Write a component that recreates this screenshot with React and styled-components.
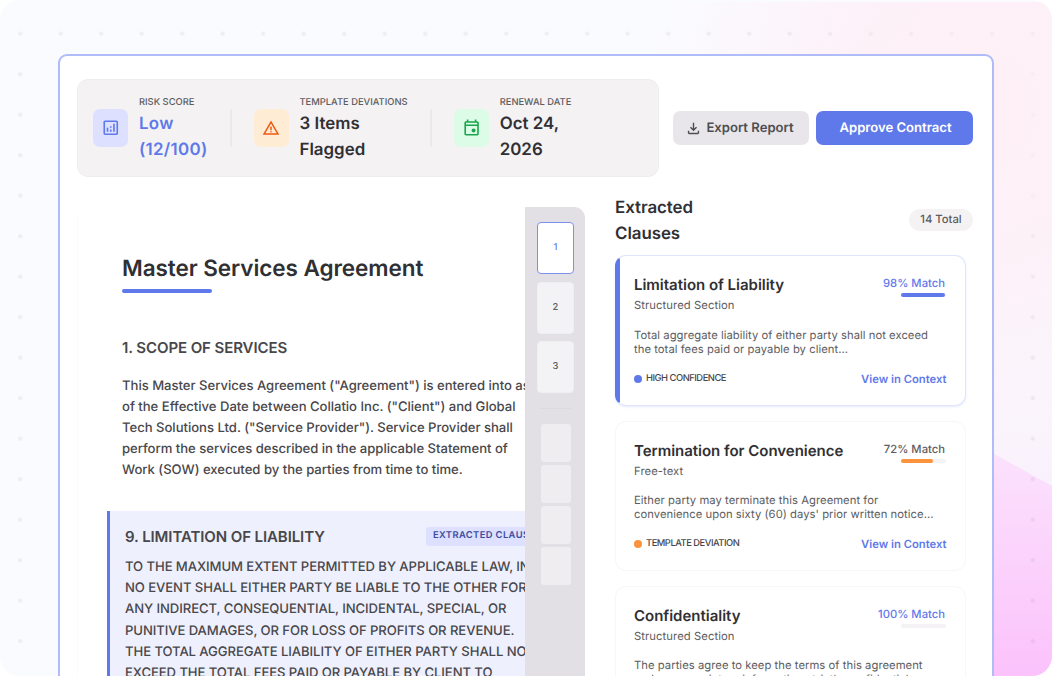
import React from 'react';
import styled, { createGlobalStyle } from 'styled-components';

const GlobalStyle = createGlobalStyle`
  * { box-sizing: border-box; }
  body {
    margin: 0;
    background: #fff;
    font-family: Inter, "Liberation Sans", sans-serif;
    color: #303034;
    overflow: hidden;
    text-rendering: geometricPrecision;
  }
  h1, h2, h3, p { margin: 0; font-weight: inherit; }
`;

const Page = styled.div`
  position: relative;
  width: 1052px;
  height: 676px;
  padding: 54px 58px 0;
  border-radius: 20px;
  overflow: hidden;
  background: #fafbff;
`;

const Backdrop = styled.svg`
  position: absolute;
  left: 0;
  top: 0;
`;

const Window = styled.main`
  position: relative;
  width: 936px;
  height: 700px;
  padding: 23px 17px 0;
  background: #fff;
  border: 2px solid #afbcf8;
  border-radius: 9px;
`;

const Toolbar = styled.header`
  display: flex;
  align-items: center;
`;

const Summary = styled.section`
  display: flex;
  flex: none;
  width: 582px;
  height: 98px;
  padding: 15px 15px 0;
  margin-right: 14px;
  background: #f4f2f3;
  border: 1px solid #eeecee;
  border-radius: 11px;
`;

const Metric = styled.div`
  display: flex;
  width: ${(p) => p.$width}px;
`;

const Tile = styled.div`
  display: flex;
  flex: none;
  align-items: center;
  justify-content: center;
  width: 35px;
  height: 38px;
  margin: 14px 11px 0 0;
  border-radius: 7px;
  background: ${(p) => p.$bg};
  color: ${(p) => p.$color};
`;

const Divider = styled.div`
  flex: none;
  width: 1.5px;
  height: 38px;
  margin: 14px 22px 0 0;
  background: #ebe9eb;
`;

const MetricLabel = styled.p`
  height: 15px;
  padding-top: 1px;
  font-size: 9.375px;
  font-weight: 500;
  line-height: 14px;
  color: #5d5c60;
  white-space: nowrap;
`;

const MetricValue = styled.p`
  padding-top: 1px;
  font-size: 16.9px;
  font-weight: 600;
  line-height: 26px;
  letter-spacing: ${(p) => p.$tracking || 0}px;
  white-space: pre-line;
  color: ${(p) => p.$color || '#303034'};
`;

const Button = styled.button`
  display: flex;
  flex: none;
  align-items: center;
  justify-content: center;
  gap: 4px;
  width: ${(p) => (p.$primary ? 157 : 136)}px;
  height: 34px;
  padding: ${(p) => (p.$primary ? '0 0 0 2px' : '0 3px 0 0')};
  margin-right: 7px;
  border: 0;
  border-radius: 7px;
  font: 600 13.1px Inter, sans-serif;
  text-rendering: inherit;
  color: ${(p) => (p.$primary ? '#fff' : '#4f4e53')};
  background: ${(p) => (p.$primary ? '#5f79ea' : '#e8e6ea')};
`;

const Body = styled.div`
  display: flex;
`;

const Document = styled.article`
  display: flex;
  width: 508px;
  height: 500px;
  margin-top: 30px;
  overflow: hidden;
  border-radius: 11px 11px 0 0;
`;

const Paper = styled.div`
  width: 448px;
  padding-left: 29px;
  overflow: hidden;
  white-space: nowrap;
  border-left: 1px solid #fcfbfc;
`;

const DocTitle = styled.h1`
  margin: 46px 0 0 15px;
  font-size: 22.5px;
  font-weight: 600;
  line-height: 32px;
  letter-spacing: -0.06px;
`;

const Rule = styled.div`
  width: 90px;
  height: 4px;
  margin: 4px 0 0 15px;
  border-radius: 2px;
  background: #5f79ea;
`;

const Section = styled.section`
  height: 173px;
  padding-left: 15px;
  margin-top: 45px;
`;

const SectionTitle = styled.h2`
  font-size: 15px;
  font-weight: 600;
  line-height: 20px;
  letter-spacing: -0.09px;
  color: #48474b;
`;

const Copy = styled.div`
  margin-top: ${(p) => p.$gap}px;
  font-size: 13.1px;
  font-weight: 450;
  line-height: ${(p) => p.$leading}px;
  letter-spacing: ${(p) => p.$tracking}px;
  color: #48474b;
`;

const Highlight = styled.section`
  width: 470px;
  height: 200px;
  padding: 16px 0 0 15px;
  background: #eef0fd;
  border-left: 3px solid #5f79ea;
`;

const HighlightHead = styled.div`
  display: flex;
  justify-content: space-between;
  height: 20px;
`;

const Tag = styled.span`
  width: 151px;
  height: 19px;
  padding: 1px 0 0 7px;
  border-radius: 3px;
  background: #dde0fe;
  font-size: 9.375px;
  font-weight: 600;
  line-height: 16px;
  letter-spacing: 0.4px;
  color: #3b4c9f;
`;

const Thumbs = styled.nav`
  display: flex;
  flex-direction: column;
  align-items: center;
  gap: 7.5px;
  width: 60px;
  padding: 15px 0 0 1px;
  background: #e2e0e4;
`;

const Thumb = styled.div`
  display: flex;
  align-items: center;
  justify-content: center;
  width: 37.5px;
  height: 52px;
  padding-bottom: 1px;
  border-radius: 4px;
  border: 1px solid ${(p) => (p.$active ? '#7b90ee' : '#efeff1')};
  background: ${(p) => (p.$active ? '#fff' : '#f3f3f5')};
  color: ${(p) => (p.$active ? '#5f79ea' : '#5d5c60')};
  font-size: 9.375px;
  font-weight: 500;
`;

const ThumbRule = styled.div`
  width: 31px;
  height: 1.5px;
  margin: 7px 0;
  background: #dcdadd;
`;

const MiniList = styled.div`
  display: flex;
  flex-direction: column;
  gap: 3px;
`;

const MiniThumb = styled.div`
  width: 30px;
  height: 38px;
  border-radius: 3px;
  background: #efedf0;
`;

const Clauses = styled.aside`
  width: 358px;
  margin: 17px 0 0 30px;
`;

const ClausesHead = styled.div`
  display: flex;
  align-items: center;
  justify-content: space-between;
  height: 52px;
`;

const ClausesTitle = styled.h2`
  width: 110px;
  padding-top: 2px;
  font-size: 16.9px;
  font-weight: 600;
  line-height: 26px;
  letter-spacing: -0.06px;
`;

const Pill = styled.span`
  width: 64px;
  height: 22px;
  border-radius: 11px;
  background: #f4f2f3;
  color: #5d5c60;
  font-size: 11.25px;
  font-weight: 500;
  line-height: 20px;
  text-align: center;
`;

const CardList = styled.div`
  display: flex;
  flex-direction: column;
  gap: 15px;
  margin-top: 9px;
`;

const Card = styled.div`
  width: 351px;
  height: 150.5px;
  padding: 17px 18px 0;
  overflow: hidden;
  border-radius: 11px;
  border: 1px solid ${(p) => (p.$active ? '#dfe5fb' : '#f8f7f8')};
  box-shadow: ${(p) => (p.$active ? '0 1px 2px rgba(95, 121, 234, 0.15)' : 'none')};
  background: ${(p) =>
    p.$active ? 'linear-gradient(90deg, #5f79ea 5px, #fff 5px) border-box' : '#fff'};
  border-left-color: ${(p) => (p.$active ? 'transparent' : '#f8f7f8')};
`;

const CardRow = styled.div`
  display: flex;
  justify-content: space-between;
`;

const CardTitle = styled.h3`
  font-size: 15px;
  font-weight: 600;
  line-height: 24px;
  letter-spacing: -0.02px;
`;

const CardKind = styled.p`
  font-size: 11.25px;
  line-height: 17px;
  letter-spacing: 0.07px;
  color: #5d5c60;
`;

const Match = styled.div`
  display: flex;
  flex-direction: column;
  align-items: flex-end;
  padding-right: 2px;
  font-size: 11.25px;
  font-weight: 500;
  line-height: 20px;
  color: ${(p) => p.$color};
`;

const Meter = styled.div`
  width: 45px;
  height: 4px;
  margin-right: -1px;
  border-radius: 2px;
  background: #f4f2f4;
`;

const MeterFill = styled.div`
  height: 4px;
  border-radius: 2px;
  background: ${(p) => p.$color};
`;

const Excerpt = styled.p`
  height: 28px;
  margin-top: ${(p) => (p.$active ? 14 : 13.4)}px;
  font-size: 11.25px;
  line-height: 14px;
  letter-spacing: 0.04px;
  white-space: pre;
  color: #5d5c60;
`;

const Status = styled.div`
  display: flex;
  align-items: center;
  gap: 4px;
  font-size: 9.375px;
  font-weight: 500;
  letter-spacing: -0.48px;
  color: #48474b;
`;

const Dot = styled.span`
  width: 8px;
  height: 8px;
  margin-top: 1px;
  border-radius: 50%;
  background: ${(p) => p.$color};
`;

const Footer = styled(CardRow)`
  align-items: center;
  height: 20px;
  margin-top: 12.4px;
`;

const Link = styled.a`
  padding-top: 2px;
  margin-right: 0.5px;
  font-size: 11.25px;
  font-weight: 600;
  color: #5f79ea;
`;

const ICONS = {
  analytics:
    'M280-280h80v-200h-80v200Zm320 0h80v-400h-80v400Zm-160 0h80v-120h-80v120Zm0-200h80v-80h-80v80ZM200-120q-33 0-56.5-23.5T120-200v-560q0-33 23.5-56.5T200-840h560q33 0 56.5 23.5T840-760v560q0 33-23.5 56.5T760-120H200Zm0-80h560v-560H200v560Z',
  warning:
    'm40-120 440-760 440 760H40Zm138-80h604L480-720 178-200Zm302-40q17 0 28.5-11.5T520-280q0-17-11.5-28.5T480-320q-17 0-28.5 11.5T440-280q0 17 11.5 28.5T480-240Zm-40-120h80v-200h-80v200Z',
  event:
    'M580-240q-42 0-71-29t-29-71q0-42 29-71t71-29q42 0 71 29t29 71q0 42-29 71t-71 29ZM200-80q-33 0-56.5-23.5T120-160v-560q0-33 23.5-56.5T200-800h40v-80h80v80h320v-80h80v80h40q33 0 56.5 23.5T840-720v560q0 33-23.5 56.5T760-80H200Zm0-80h560v-400H200v400Zm0-480h560v-80H200v80Z',
  download:
    'M480-320 280-520l56-58 104 104v-326h80v326l104-104 56 58-200 200ZM240-160q-33 0-56.5-23.5T160-240v-120h80v120h480v-120h80v120q0 33-23.5 56.5T720-160H240Z',
};

const Icon = ({ name, size }) => (
  <svg width={size} height={size} viewBox="0 -960 960 960" fill="currentColor">
    <path d={ICONS[name]} />
  </svg>
);

const metrics = [
  { label: 'RISK SCORE', value: 'Low\n(12/100)', icon: 'analytics', size: 19.5, bg: '#dde0fe', color: '#5f79ea', text: '#5f79ea', tracking: 0.3, width: 137 },
  { label: 'TEMPLATE DEVIATIONS', value: '3 Items\nFlagged', icon: 'warning', size: 18, bg: '#ffecd5', color: '#ee5a13', width: 176.7 },
  { label: 'RENEWAL DATE', value: 'Oct 24,\n2026', icon: 'event', size: 19.2, bg: '#dcfce8', color: '#18a54b', width: 150 },
];

const scope = [
  'This Master Services Agreement ("Agreement") is entered into as',
  'of the Effective Date between Collatio Inc. ("Client") and Global',
  'Tech Solutions Ltd. ("Service Provider"). Service Provider shall',
  'perform the services described in the applicable Statement of',
  'Work (SOW) executed by the parties from time to time.',
];

const liability = [
  'TO THE MAXIMUM EXTENT PERMITTED BY APPLICABLE LAW, IN',
  'NO EVENT SHALL EITHER PARTY BE LIABLE TO THE OTHER FOR',
  'ANY INDIRECT, CONSEQUENTIAL, INCIDENTAL, SPECIAL, OR',
  'PUNITIVE DAMAGES, OR FOR LOSS OF PROFITS OR REVENUE.',
  'THE TOTAL AGGREGATE LIABILITY OF EITHER PARTY SHALL NOT',
  'EXCEED THE TOTAL FEES PAID OR PAYABLE BY CLIENT TO',
];

const clauses = [
  {
    title: 'Limitation of Liability',
    kind: 'Structured Section',
    match: 98,
    fill: 98,
    color: '#5f79ea',
    bar: '#5f79ea',
    text: 'Total aggregate liability of either party shall not exceed\nthe total fees paid or payable by client...',
    status: 'HIGH CONFIDENCE',
    active: true,
  },
  {
    title: 'Termination for Convenience',
    kind: 'Free-text',
    match: 72,
    fill: 72,
    color: '#5d5c60',
    bar: '#fb923c',
    text: "Either party may terminate this Agreement for\nconvenience upon sixty (60) days' prior written notice...",
    status: 'TEMPLATE DEVIATION',
  },
  {
    title: 'Confidentiality',
    kind: 'Structured Section',
    match: 100,
    fill: 0,
    color: '#5f79ea',
    bar: '#5f79ea',
    text: 'The parties agree to keep the terms of this agreement\nand any proprietary information strictly confidential...',
    status: 'HIGH CONFIDENCE',
  },
];

const App = () => {
  return (
    <>
      <GlobalStyle />
      <Page>
        <Backdrop width="1052" height="676">
          <defs>
            <radialGradient id="blush" gradientUnits="userSpaceOnUse" cx="0" cy="0" r="1" gradientTransform="translate(985 110) scale(340 380)">
              <stop offset="0" stopColor="#fef0f5" />
              <stop offset="0.4" stopColor="#fdf1f8" />
              <stop offset="1" stopColor="#fdf3fa" stopOpacity="0" />
            </radialGradient>
            <linearGradient id="lilac" x1="0" y1="0" x2="0" y2="1">
              <stop offset="0" stopColor="#f9f5fe" stopOpacity="0" />
              <stop offset="1" stopColor="#f9f1fc" />
            </linearGradient>
            <linearGradient id="glow" x1="0" y1="0" x2="0" y2="1">
              <stop offset="0.1" stopColor="#fbe2fd" />
              <stop offset="1" stopColor="#fbc2fb" />
            </linearGradient>
            <pattern id="dots" width="40.5" height="40.5" patternUnits="userSpaceOnUse">
              <circle cx="20.2" cy="33.7" r="2.2" fill="#3c3c50" fillOpacity="0.065" />
            </pattern>
            <radialGradient id="fade" gradientUnits="userSpaceOnUse" cx="0" cy="0" r="1" gradientTransform="translate(1000 130) scale(260 200)">
              <stop offset="0.3" stopColor="#555" />
              <stop offset="1" stopColor="#fff" />
            </radialGradient>
            <mask id="dotMask">
              <rect width="1052" height="676" fill="url(#fade)" />
            </mask>
          </defs>
          <rect x="900" y="150" width="152" height="350" fill="url(#lilac)" />
          <rect y="2" width="1052" height="674" fill="url(#blush)" />
          <path d="M940 424 L1052 486 V676 H940 Z" fill="url(#glow)" />
          <rect width="1052" height="676" fill="url(#dots)" mask="url(#dotMask)" />
        </Backdrop>
        <Window>
          <Toolbar>
            <Summary>
              {metrics.map((m, i) => (
                <React.Fragment key={m.label}>
                  {i > 0 && <Divider />}
                  <Metric $width={m.width}>
                    <Tile $bg={m.bg} $color={m.color}>
                      <Icon name={m.icon} size={m.size} />
                    </Tile>
                    <div>
                      <MetricLabel>{m.label}</MetricLabel>
                      <MetricValue $color={m.text} $tracking={m.tracking}>{m.value}</MetricValue>
                    </div>
                  </Metric>
                </React.Fragment>
              ))}
            </Summary>
            <Button>
              <Icon name="download" size={17} />
              Export Report
            </Button>
            <Button $primary>Approve Contract</Button>
          </Toolbar>

          <Body>
            <Document>
              <Paper>
                <DocTitle>Master Services Agreement</DocTitle>
                <Rule />
                <Section>
                  <SectionTitle>1. SCOPE OF SERVICES</SectionTitle>
                  <Copy $gap={18} $leading={21.1} $tracking={-0.02}>
                    {scope.map((line) => <p key={line}>{line}</p>)}
                  </Copy>
                </Section>
                <Highlight>
                  <HighlightHead>
                    <SectionTitle>9. LIMITATION OF LIABILITY</SectionTitle>
                    <Tag>EXTRACTED CLAUSE</Tag>
                  </HighlightHead>
                  <Copy $gap={10} $leading={21.2} $tracking={-0.07}>
                    {liability.map((line) => <p key={line}>{line}</p>)}
                  </Copy>
                </Highlight>
              </Paper>
              <Thumbs>
                <Thumb $active>1</Thumb>
                <Thumb>2</Thumb>
                <Thumb>3</Thumb>
                <ThumbRule />
                <MiniList>
                  <MiniThumb />
                  <MiniThumb />
                  <MiniThumb />
                  <MiniThumb />
                </MiniList>
              </Thumbs>
            </Document>

            <Clauses>
              <ClausesHead>
                <ClausesTitle>Extracted Clauses</ClausesTitle>
                <Pill>14 Total</Pill>
              </ClausesHead>
              <CardList>
                {clauses.map((c) => (
                  <Card key={c.title} $active={c.active}>
                    <CardRow>
                      <div>
                        <CardTitle>{c.title}</CardTitle>
                        <CardKind>{c.kind}</CardKind>
                      </div>
                      <Match $color={c.color}>
                        {c.match}% Match
                        <Meter>
                          <MeterFill $color={c.bar} style={{ width: `${c.fill}%` }} />
                        </Meter>
                      </Match>
                    </CardRow>
                    <Excerpt $active={c.active}>{c.text}</Excerpt>
                    <Footer>
                      <Status>
                        <Dot $color={c.bar} />
                        {c.status}
                      </Status>
                      <Link>View in Context</Link>
                    </Footer>
                  </Card>
                ))}
              </CardList>
            </Clauses>
          </Body>
        </Window>
      </Page>
    </>
  );
};

export default App;
